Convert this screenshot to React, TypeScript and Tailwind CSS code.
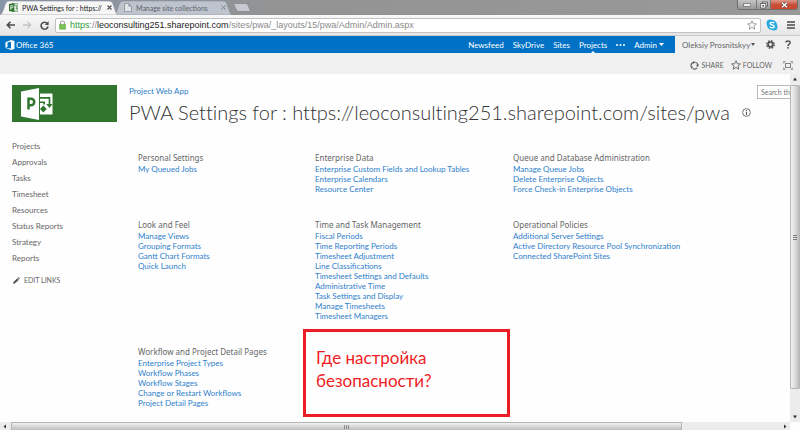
import type { ReactNode } from 'react';

interface Section {
  title: string;
  links: string[];
}

const SECTIONS: Section[] = [
  { title: 'Personal Settings', links: ['My Queued Jobs'] },
  {
    title: 'Enterprise Data',
    links: ['Enterprise Custom Fields and Lookup Tables', 'Enterprise Calendars', 'Resource Center'],
  },
  {
    title: 'Queue and Database Administration',
    links: ['Manage Queue Jobs', 'Delete Enterprise Objects', 'Force Check-in Enterprise Objects'],
  },
  {
    title: 'Look and Feel',
    links: ['Manage Views', 'Grouping Formats', 'Gantt Chart Formats', 'Quick Launch'],
  },
  {
    title: 'Time and Task Management',
    links: [
      'Fiscal Periods',
      'Time Reporting Periods',
      'Timesheet Adjustment',
      'Line Classifications',
      'Timesheet Settings and Defaults',
      'Administrative Time',
      'Task Settings and Display',
      'Manage Timesheets',
      'Timesheet Managers',
    ],
  },
  {
    title: 'Operational Policies',
    links: ['Additional Server Settings', 'Active Directory Resource Pool Synchronization', 'Connected SharePoint Sites'],
  },
  {
    title: 'Workflow and Project Detail Pages',
    links: [
      'Enterprise Project Types',
      'Workflow Phases',
      'Workflow Stages',
      'Change or Restart Workflows',
      'Project Detail Pages',
    ],
  },
];

const NAV = ['Projects', 'Approvals', 'Tasks', 'Timesheet', 'Resources', 'Status Reports', 'Strategy', 'Reports'];

function TabShape({ fill }: { fill: string }) {
  return (
    <svg viewBox="0 0 118 15" preserveAspectRatio="none" className="absolute inset-0 size-full" aria-hidden="true">
      <path d="M0 15 C2 14 3 11 5 5 Q6 1 9 1 H109 Q112 1 113 4 C115 10 116 14 118 15Z" fill={fill} stroke="#8d929b" strokeWidth="0.6" />
    </svg>
  );
}

function TabStrip() {
  return (
    <div className="flex h-[15px] bg-linear-to-r from-[#8794a8] via-[#939393] via-35% to-[#999999]">
      <div className="relative z-10 flex w-[118px] items-center gap-1 pl-[9px]">
        <TabShape fill="#f6f6f6" />
        <svg viewBox="0 0 10 10" className="relative size-[9px]" aria-hidden="true">
          <rect x="4" y="1" width="6" height="8" fill="#fff" stroke="#31752f" strokeWidth="0.8" />
          <path d="M6 3H8.500V6M7.500 5.500L8.500 7L9.500 5.500" fill="none" stroke="#31752f" strokeWidth="0.8" />
          <path d="M0 1L6 0V10L0 9Z" fill="#31752f" />
          <path d="M2 7.500V2.800H3.200A1.300 1.300 0 0 1 3.200 5.400H2" fill="none" stroke="#fff" strokeWidth="0.9" />
        </svg>
        <span className="relative w-[81px] text-[7px] leading-[10px] whitespace-nowrap text-[#222222]">
          PWA Settings for : https://
        </span>
        <button aria-label="Close tab" className="relative">
          <svg viewBox="0 0 5 5" className="size-[5px]"><path d="M0.500 0.500L4.500 4.500M4.500 0.500L0.500 4.500" stroke="#555" strokeWidth="1.100" /></svg>
        </button>
      </div>
      <div className="relative flex w-[118px] -ml-1 items-center gap-1 pl-[10px]">
        <TabShape fill="#bec4cd" />
        <svg viewBox="0 0 8 9" className="relative h-[9px] w-[8px]" aria-hidden="true">
          <path d="M0.500 0.500H4.800L7.500 3.200V8.500H0.500ZM4.800 0.500V3.200H7.500" fill="#e2e4e8" stroke="#8b8f96" strokeWidth="0.8" />
        </svg>
        <span className="relative w-[81px] text-[7px] leading-[10px] whitespace-nowrap text-[#5b626c]">
          Manage site collections
        </span>
        <button aria-label="Close tab" className="relative">
          <svg viewBox="0 0 5 5" className="size-[5px]"><path d="M0.500 0.500L4.500 4.500M4.500 0.500L0.500 4.500" stroke="#777c84" strokeWidth="1" /></svg>
        </button>
      </div>
      <button aria-label="New tab" className="ml-[1px] self-center">
        <svg viewBox="0 0 18 9" className="h-[9px] w-[18px]">
          <path d="M2 0.500H13Q14.500 0.500 15 2L17 7Q17.500 8.500 16 8.500H5Q4 8.500 3.500 7L1 2Q0.500 0.500 2 0.500Z" fill="#c6cad0" stroke="#808389" strokeWidth="0.7" />
        </svg>
      </button>
      <div className="mr-[2px] ml-auto flex h-[10px] overflow-hidden rounded-b-[3px] border border-t-0 border-[#6f6f6f]">
        <button aria-label="Minimize" className="flex w-[19px] items-center justify-center border-r border-[#777777] bg-linear-to-b from-[#c5c5c5] to-[#999999]">
          <svg viewBox="0 0 8 4" className="h-[4px] w-[8px]"><rect x="0.500" y="0.800" width="7" height="2.400" fill="#fff" stroke="#555" strokeWidth="0.6" /></svg>
        </button>
        <button aria-label="Restore" className="flex w-[14px] items-center justify-center border-r border-[#777777] bg-linear-to-b from-[#c5c5c5] to-[#999999]">
          <svg viewBox="0 0 8 8" className="size-[8px]">
            <rect x="2.500" y="1" width="5" height="4" fill="#ddd" stroke="#444" strokeWidth="0.7" />
            <rect x="0.800" y="2.600" width="5" height="4.400" fill="#fff" stroke="#444" strokeWidth="0.7" />
            <rect x="2.400" y="4" width="1.800" height="1.500" fill="#444" />
          </svg>
        </button>
        <button aria-label="Close" className="flex w-[26px] items-center justify-center bg-linear-to-b from-[#dd9a8d] via-[#c8503a] to-[#d0452c]">
          <svg viewBox="0 0 7 6" className="h-[6px] w-[7px]">
            <path d="M1 0.800L6 5.200M6 0.800L1 5.200" stroke="#5c3a35" strokeWidth="2.400" />
            <path d="M1 0.800L6 5.200M6 0.800L1 5.200" stroke="#fff" strokeWidth="1.500" />
          </svg>
        </button>
      </div>
    </div>
  );
}

const STAR = 'M5.500 0.800L6.900 4.100L10.400 4.300L7.700 6.600L8.600 10.100L5.500 8.200L2.400 10.100L3.300 6.600L0.600 4.300L4.100 4.100Z';

function Toolbar() {
  return (
    <div className="flex h-[21px] items-center border-b border-[#c9c9c9] bg-linear-to-b from-[#f8f8f8] to-[#e6e6e6] pr-[5px] pl-[6px]">
      <div className="flex items-center gap-2">
        <button aria-label="Back">
          <svg viewBox="0 0 9 8" className="h-[8px] w-[9px]"><path d="M9 4H1.500M4.500 0.800L1.300 4L4.500 7.200" fill="none" stroke="#4a4a4a" strokeWidth="1.600" /></svg>
        </button>
        <button aria-label="Forward">
          <svg viewBox="0 0 9 8" className="h-[8px] w-[9px]"><path d="M0 4H7.500M4.500 0.800L7.700 4L4.500 7.200" fill="none" stroke="#c4c4c4" strokeWidth="1.300" /></svg>
        </button>
        <button aria-label="Reload">
          <svg viewBox="0 0 9 9" className="size-[9px]">
            <path d="M7.300 2.500A3.500 3.500 0 1 0 8 5.500" fill="none" stroke="#4a4a4a" strokeWidth="1.500" />
            <path d="M8.600 0.300V4H4.900Z" fill="#4a4a4a" />
          </svg>
        </button>
      </div>
      <div className="ml-[6px] flex h-[15px] flex-1 items-center rounded-[2px] border border-[#c2c2c2] bg-white pr-[3px] pl-[3px]">
        <svg viewBox="0 0 7 10" className="mr-[4px] h-[10px] w-[7px]" aria-hidden="true">
          <path d="M1.500 5V3A2 2 0 0 1 5.500 3V5" fill="none" stroke="#a5a5a5" strokeWidth="1.100" />
          <rect x="0.300" y="4.300" width="6.400" height="5" rx="0.600" fill="#7cc158" stroke="#5da33b" strokeWidth="0.5" />
        </svg>
        <div className="flex-1 text-[9px] leading-[12px] text-[#8a8a8a] font-['Liberation_Sans',sans-serif]">
          <span className="text-[#2f9e3a]">https</span>://<span className="text-[#1c1c1c]">leoconsulting251.sharepoint.com</span>
          /sites/pwa/_layouts/15/pwa/Admin/Admin.aspx
        </div>
        <button aria-label="Bookmark">
          <svg viewBox="0 0 11 11" className="size-[10px]"><path d={STAR} fill="#fff" stroke="#8a8a8a" strokeWidth="0.9" /></svg>
        </button>
      </div>
      <button aria-label="Skype" className="ml-[5px]">
        <svg viewBox="0 0 12 12" className="size-[12px]">
          <circle cx="4" cy="4" r="3.500" fill="#2ba9e0" />
          <circle cx="8" cy="8" r="3.500" fill="#2ba9e0" />
          <circle cx="6" cy="6" r="5" fill="#2ba9e0" />
          <path d="M8.200 4.200C7.300 2.900 4 3 4 4.600C4 6.300 8.200 5.500 8.200 7.400C8.200 9.200 4.600 9.100 3.800 7.700" fill="none" stroke="#fff" strokeWidth="1.300" />
        </svg>
      </button>
      <button aria-label="Menu" className="ml-[9px]">
        <svg viewBox="0 0 8 8" className="size-[8px]"><path d="M0 1H8M0 4H8M0 7H8" stroke="#4a4a4a" strokeWidth="1.600" /></svg>
      </button>
    </div>
  );
}

function SuiteBar() {
  return (
    <div className="flex h-[17px] bg-[#f0f0f1] text-[8px] leading-[10px]">
      <div className="flex flex-1 items-center bg-[#0072c6] pr-[11px] pl-[5px] text-white">
        <svg viewBox="0 0 9 10" className="size-[10px]" aria-hidden="true">
          <path d="M0 2.200L5.500 0L9 1.100V8.900L5.500 10L0 7.900L5.500 8.500V1.800L2 2.600V7.100L0 7.900Z" fill="#fff" />
        </svg>
        <a href="#office" className="ml-[1px]">Office 365</a>
        <nav className="ml-auto flex h-full items-center gap-[9px]">
          <a href="#newsfeed">Newsfeed</a>
          <a href="#skydrive">SkyDrive</a>
          <a href="#sites">Sites</a>
          <a href="#projects" className="relative flex h-full items-center">
            Projects
            <svg viewBox="0 0 4 2" className="absolute bottom-0 left-1/2 h-[2px] w-[4px] -translate-x-1/2" aria-hidden="true"><path d="M0 2L2 0L4 2Z" fill="#fff" /></svg>
          </a>
          <button aria-label="More">
            <svg viewBox="0 0 9 2" className="h-[2px] w-[9px]"><circle cx="1" cy="1" r="1" fill="#fff" /><circle cx="4.500" cy="1" r="1" fill="#fff" /><circle cx="8" cy="1" r="1" fill="#fff" /></svg>
          </button>
          <button className="flex items-center gap-[2px]">
            Admin
            <svg viewBox="0 0 5 3" className="h-[3px] w-[5px]" aria-hidden="true"><path d="M0 0H5L2.500 3Z" fill="#fff" /></svg>
          </button>
        </nav>
      </div>
      <div className="flex w-[125px] items-center justify-between pr-[9px] pl-[7px] text-[#666666]">
        <button className="flex items-center gap-[1px]">
          Oleksiy Prosnitskyy
          <svg viewBox="0 0 4 3" className="h-[3px] w-[4px]" aria-hidden="true"><path d="M0 0H4L2 3Z" fill="#555" /></svg>
        </button>
        <button aria-label="Settings">
          <svg viewBox="0 0 10 10" className="size-[9px]">
            <circle cx="5" cy="5" r="4" fill="none" stroke="#555" strokeWidth="1.800" strokeDasharray="1.800 1.340" />
            <circle cx="5" cy="5" r="2.600" fill="none" stroke="#555" strokeWidth="1.900" />
          </svg>
        </button>
        <button aria-label="Help">
          <svg viewBox="0 0 6 9" className="h-[9px] w-[6px]">
            <path d="M0.900 2.600C0.900 0.300 5.200 0.300 5.200 2.600C5.200 4.200 3 4.200 3 6" fill="none" stroke="#555" strokeWidth="1.500" />
            <rect x="2.200" y="7" width="1.600" height="1.600" fill="#555" />
          </svg>
        </button>
      </div>
    </div>
  );
}

function RibbonAction({ label, children }: { label: string; children: ReactNode }) {
  return (
    <button className="flex items-center gap-[2px]">
      {children}
      {label}
    </button>
  );
}

function RibbonRow() {
  return (
    <div className="flex h-[21px] items-center justify-end gap-[7px] bg-[#f0f0f1] pt-[3px] pr-[7px] text-[7px] leading-[10px] text-[#666666]">
      <RibbonAction label="SHARE">
        <svg viewBox="0 0 10 10" className="size-[9px]" aria-hidden="true">
          <path d="M1.300 5.800A3.800 3.800 0 0 1 4 1.400M6 1.300A3.800 3.800 0 0 1 8.700 4.500M7.800 7.600A3.800 3.800 0 0 1 3 8.300" fill="none" stroke="#555" strokeWidth="1.200" />
          <path d="M3.500 0L6 1.500L3.800 3.200ZM10 4L8.500 7L6.800 4.400ZM0.300 5.800L3.300 6L2 9Z" fill="#555" />
        </svg>
      </RibbonAction>
      <RibbonAction label="FOLLOW">
        <svg viewBox="0 0 11 11" className="size-[10px]" aria-hidden="true"><path d={STAR} fill="none" stroke="#666" strokeWidth="1" /></svg>
      </RibbonAction>
      <button aria-label="Focus on content" className="ml-[4px]">
        <svg viewBox="0 0 10 9" className="h-[9px] w-[10px]">
          <rect x="2.500" y="2.500" width="5" height="4" fill="none" stroke="#777" strokeWidth="0.9" />
          <path d="M0.500 2.500V0.500H2.500M7.500 0.500H9.500V2.500M9.500 6.500V8.500H7.500M2.500 8.500H0.500V6.500M0.500 0.500L2.500 2.500M9.500 0.500L7.500 2.500M9.500 8.500L7.500 6.500M0.500 8.500L2.500 6.500" fill="none" stroke="#888" strokeWidth="0.7" />
        </svg>
      </button>
    </div>
  );
}

function ProjectLogo() {
  return (
    <div className="h-[37px] w-[105px] shrink-0 bg-[#31752f] pt-[3px] pl-[9px]">
      <svg viewBox="0 0 32 32" className="size-[32px]" aria-label="Project">
        <rect x="19" y="5.500" width="12.500" height="21" rx="0.500" fill="#fff" />
        <path d="M0 3.500L18 0V32L0 28.500Z" fill="#fff" />
        <path d="M19 9.800H28.500V17" fill="none" stroke="#31752f" strokeWidth="1.700" />
        <path d="M25.300 16H31.500L28.400 20ZM19 13.500H24V16.500H22.300V15H19ZM22.300 17.500L25.800 21L22.300 24.500L19 21Z" fill="#31752f" />
        <path d="M7.500 21.500V10.800H10A3.200 3.200 0 0 1 10 17.300H7.500" fill="none" stroke="#31752f" strokeWidth="2.500" />
      </svg>
    </div>
  );
}

function SettingsSection({ title, links }: Section) {
  return (
    <section>
      <h2 className="text-[8px] leading-[12px] whitespace-nowrap text-[#666666] font-['Noto_Sans',sans-serif]">{title}</h2>
      <ul className="text-[8px] leading-[10px] whitespace-nowrap text-[#2f80cc]">
        {links.map(link => (
          <li key={link}><a href="#settings">{link}</a></li>
        ))}
      </ul>
    </section>
  );
}

function VerticalScrollbar() {
  return (
    <div className="flex w-[10px] shrink-0 flex-col items-center bg-[#ececec]">
      <svg viewBox="0 0 10 11" className="h-[11px] w-[10px]" aria-hidden="true"><path d="M3 6.500H7L5 3.500Z" fill="#333" /></svg>
      <div className="flex w-full flex-1 items-center justify-center rounded-[1px] border border-[#b4b4b4] bg-linear-to-r from-[#f2f2f2] via-[#dcdcdc] to-[#bcbcc0]">
        <svg viewBox="0 0 4 5" className="h-[5px] w-[4px]" aria-hidden="true"><path d="M0 0.500H4M0 2.500H4M0 4.500H4" stroke="#666" strokeWidth="0.8" /></svg>
      </div>
      <div className="flex h-[33px] items-end">
        <svg viewBox="0 0 10 11" className="h-[11px] w-[10px]" aria-hidden="true"><path d="M3 4.500H7L5 7.500Z" fill="#333" /></svg>
      </div>
    </div>
  );
}

function HorizontalScrollbar() {
  return (
    <div className="mr-[10px] flex h-[8px] shrink-0 bg-[#ececec]">
      <svg viewBox="0 0 11 8" className="h-[8px] w-[11px]" aria-hidden="true"><path d="M6 2.500V6.500L3.500 4.500Z" fill="#333" /></svg>
      <div className="flex flex-1 items-center justify-center border border-b-0 border-[#b4b4b4] bg-linear-to-b from-[#f2f2f2] to-[#bcbcc0]">
        <svg viewBox="0 0 5 4" className="h-[4px] w-[5px]" aria-hidden="true"><path d="M0.500 0V4M2.500 0V4M4.500 0V4" stroke="#777" strokeWidth="0.8" /></svg>
      </div>
      <div className="flex w-[108px] justify-end">
        <svg viewBox="0 0 10 8" className="h-[8px] w-[10px]" aria-hidden="true"><path d="M4 2.500V6.500L6.500 4.500Z" fill="#333" /></svg>
      </div>
    </div>
  );
}

export default function App() {
  return (
    <div className="flex min-h-screen flex-col bg-[#fefefe] font-['Lato',sans-serif]">
      <TabStrip />
      <Toolbar />
      <SuiteBar />
      <RibbonRow />

      <div className="flex flex-1">
        <div className="min-w-0 flex-1 overflow-hidden">
          {/* Title area */}
          <header className="flex pt-[11px] pl-[12px]">
            <ProjectLogo />
            <div className="ml-[12px] min-w-0 flex-1">
              <a href="#pwa" className="block text-[8px] leading-[12px] text-[#2f80cc]">Project Web App</a>
              <div className="flex items-center gap-[12px]">
                <h1 className="text-[20px] leading-[30px] font-light whitespace-nowrap text-[#333333] [font-variant-ligatures:none]">
                  PWA Settings for : https://leoconsulting251.sharepoint.com/sites/pwa
                </h1>
                <svg viewBox="0 0 9 9" className="size-[9px] shrink-0" aria-hidden="true">
                  <circle cx="4.500" cy="4.500" r="3.900" fill="none" stroke="#666" strokeWidth="0.9" />
                  <path d="M4.500 2V3.100M4.500 3.800V7" stroke="#555" strokeWidth="1.100" />
                </svg>
              </div>
            </div>
            <input
              type="text"
              aria-label="Search this site"
              placeholder="Search th"
              className="-ml-[33px] h-[14px] w-[33px] shrink-0 border border-r-0 border-[#b9b9b9] bg-white pl-[3px] text-[7px] leading-[10px] placeholder:text-[#777777]"
            />
          </header>

          {/* Quick launch and settings */}
          <div className="flex pt-[11px] pl-[12px]">
            <nav className="w-[126px] shrink-0 text-[8px] leading-[16px] text-[#666666]">
              {NAV.map(item => (
                <a key={item} href="#nav" className="block">{item}</a>
              ))}
              <button className="mt-[6px] flex items-center gap-[4px] pl-[1px] text-[7px]">
                <svg viewBox="0 0 8 8" className="size-[7px]" aria-hidden="true">
                  <path d="M0 8L0.800 5.500L5 1.300L6.700 3L2.500 7.200ZM5.500 0.800L6.300 0L8 1.700L7.200 2.500Z" fill="#555" />
                </svg>
                EDIT LINKS
              </button>
            </nav>
            <main className="relative grid flex-1 grid-cols-[177px_198px_1fr] gap-y-[25px] self-start pt-[14px]">
              {SECTIONS.map(section => (
                <SettingsSection key={section.title} {...section} />
              ))}
              <div className="absolute top-[191px] left-[165px] h-[88px] w-[207px] border-[3px] border-[#ee1c24] px-[10px] pt-[14px] text-[17px] leading-[23px] text-[#ee1c24]">
                Где настройка
                <br />
                безопасности?
              </div>
            </main>
          </div>
        </div>
        <VerticalScrollbar />
      </div>
      <HorizontalScrollbar />
    </div>
  );
}
